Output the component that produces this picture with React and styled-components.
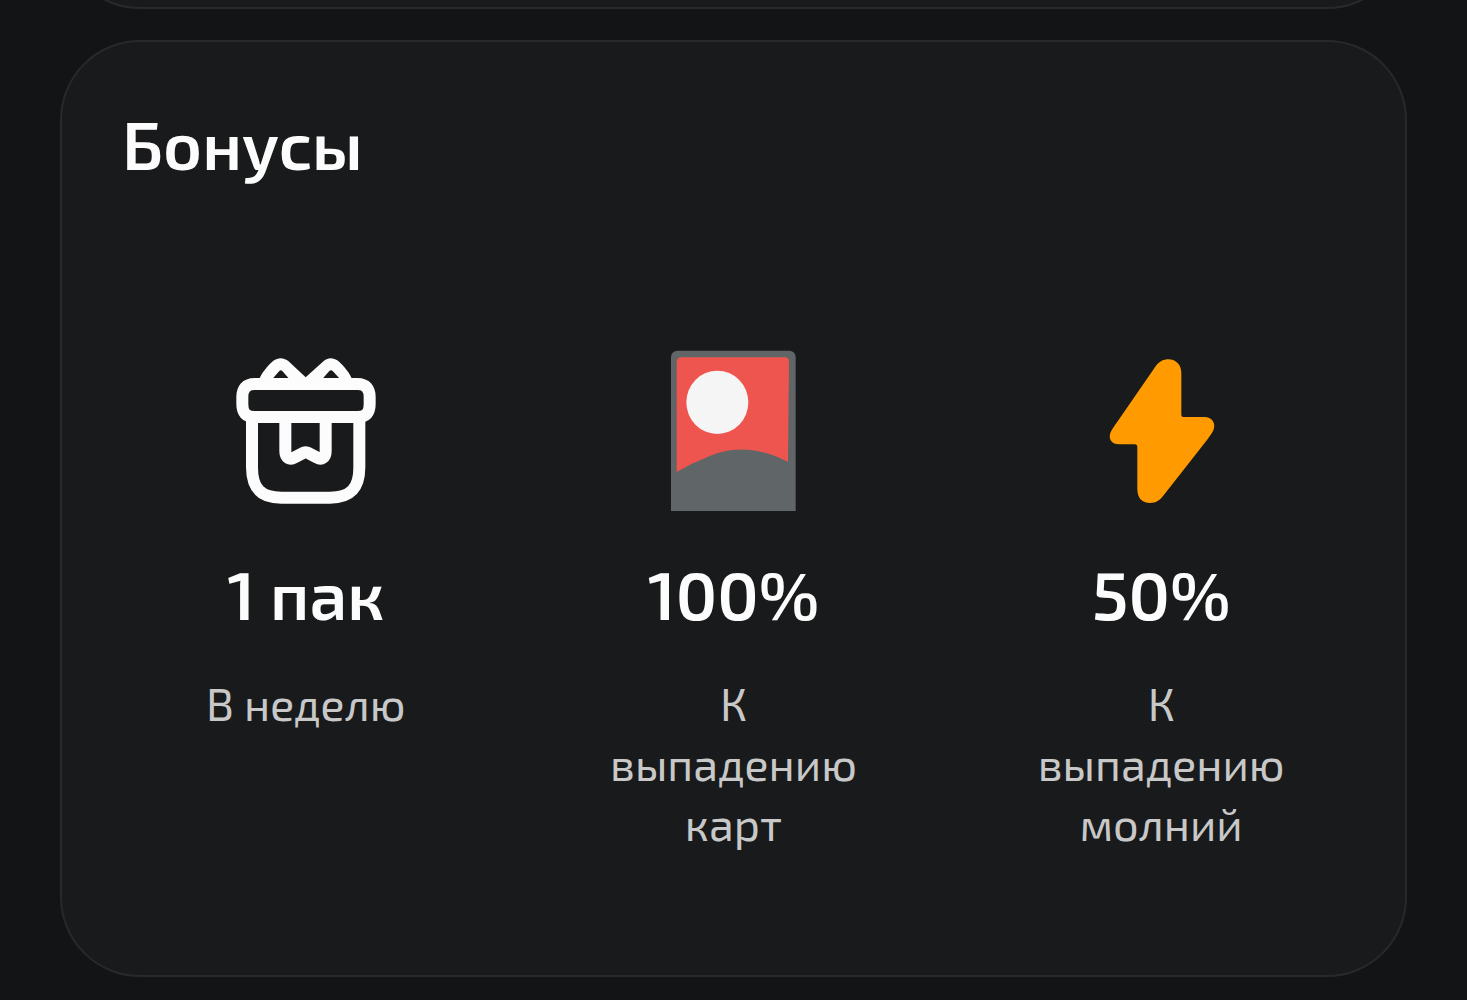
import React from "react";
import styled, { createGlobalStyle } from "styled-components";

const GlobalStyle = createGlobalStyle`
  *, *::before, *::after { box-sizing: border-box; }
  body {
    margin: 0;
    background: #131416;
    color: #fcfcfc;
    font-family: "Exo 2", Roboto, "Noto Sans", sans-serif;
  }
`;

const Page = styled.main`
  display: flex;
  flex-direction: column;
  gap: 31px;
  padding: 0 60px 20px;
  overflow: hidden;
`;

const Card = styled.section`
  padding: 60px;
  border: 2px solid #28292b;
  border-radius: 80px;
  background: #191a1b;
`;

/* The end of the card above, scrolled mostly out of view. */
const ScrolledCard = styled(Card)`
  min-height: 180px;
  margin-top: -171px;
`;

const Title = styled.h2`
  margin: 0 0 163px;
  font-size: 67px;
  font-weight: 600;
  line-height: 82px;
`;

const BonusList = styled.ul`
  display: grid;
  grid-template-columns: repeat(3, minmax(0, 1fr));
  gap: 60px;
  margin: 0;
  padding: 0 0 62px;
  list-style: none;
`;

const Bonus = styled.li`
  display: flex;
  flex-direction: column;
  align-items: center;
  gap: 40px;
  padding: 0 45px;
  text-align: center;
`;

const Icon = styled.svg`
  display: block;
  width: 166px;
  height: 166px;
`;

const Value = styled.strong`
  font-size: 67px;
  font-weight: 600;
  line-height: 80px;
  white-space: nowrap;
`;

const Label = styled.span`
  color: #c8c8c8;
  font-size: 45px;
  line-height: 60px;
`;

function GiftIcon() {
  return (
    <Icon viewBox="9 21 498 498" fill="none" stroke="#fcfcfc" strokeWidth="36" strokeLinejoin="round" aria-hidden="true">
      <path d="M104 132H412C438 132 449 147 449 171V193C449 218 438 231 412 231H104C78 231 67 218 67 193V171C67 147 78 132 104 132Z" />
      <path d="M96 231V382C96 446 122 473 184 473H330C392 473 418 446 418 382V231" />
      <path
        fill="#fcfcfc"
        stroke="none"
        fillRule="evenodd"
        d="M117 120C124 100 140 80 160 62C174 52 190 52 204 62L257 112L312 62C324 52 340 52 354 62C374 80 390 100 397 120ZM159 115L178 93Q182 89 187 93L206 115ZM309 115L328 93Q333 89 338 93L358 115Z"
      />
      <path d="M196 231V334C196 353 209 361 224 352L247 340C254 336 260 336 267 340L290 352C305 361 317 353 317 334V231" />
    </Icon>
  );
}

function FlowerCardIcon() {
  return (
    <Icon viewBox="-15 35 498 498" aria-hidden="true">
      <path fill="#606568" d="M48 527V67C48 53 56 46 70 46H400C414 46 422 53 422 67V527Z" />
      <path fill="#ee554f" d="M65 410V82C65 71 70 66 80 66H389C398 66 402 71 402 81L399 379C316 336 229 329 149 369Q107 385 65 410Z" />
      <ellipse cx="187" cy="201" rx="93" ry="95" fill="#f5f5f5" />
    </Icon>
  );
}

function BoltIcon() {
  return (
    <Icon viewBox="-36 21 498 498" aria-hidden="true">
      <path
        fill="#ff9b00"
        d="M199 76C221 45 274 53 274 98V225Q274 231 280 231H342C369 231 381 253 367 277C362 286 354 296 348 304L221 466C209 482 198 489 180 489C157 489 142 474 142 447V321Q142 313 134 313H88C61 313 53 292 64 272C68 265 74 256 80 248Z"
      />
    </Icon>
  );
}

const bonuses = [
  { icon: GiftIcon, value: "1 пак", label: "В неделю" },
  { icon: FlowerCardIcon, value: "100%", label: "К выпадению карт" },
  { icon: BoltIcon, value: "50%", label: "К выпадению молний" },
];

export default function App() {
  return (
    <>
      <GlobalStyle />
      <Page>
        <ScrolledCard />
        <Card aria-labelledby="bonuses-title">
          <Title id="bonuses-title">Бонусы</Title>
          <BonusList>
            {bonuses.map(({ icon: BonusIcon, value, label }) => (
              <Bonus key={label}>
                <BonusIcon />
                <Value>{value}</Value>
                <Label>{label}</Label>
              </Bonus>
            ))}
          </BonusList>
        </Card>
      </Page>
    </>
  );
}
